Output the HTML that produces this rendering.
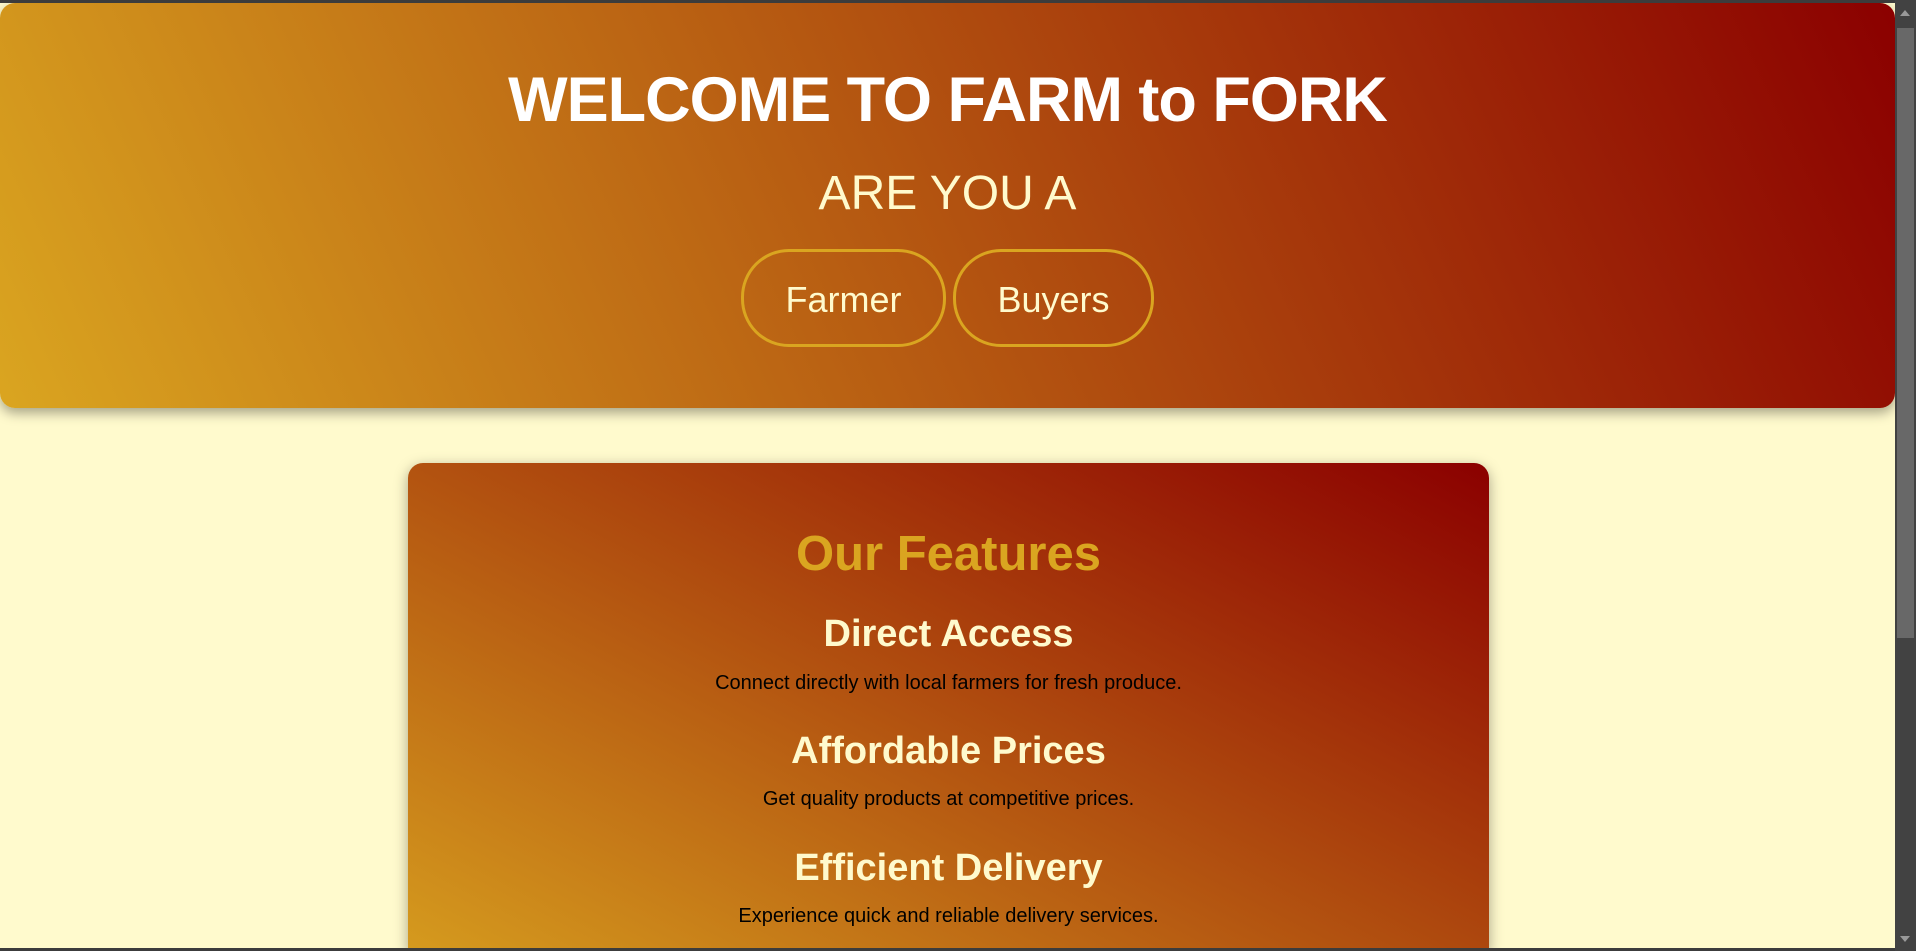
<!DOCTYPE html>
<html><head><style>
html,body{margin:0;padding:0;overflow:hidden;height:951px;}
body{width:1916px;height:951px;overflow:hidden;background:#FFFACD;position:relative;font-family:"Segoe UI","Liberation Sans",sans-serif;}
.topbar{position:absolute;left:0;top:0;width:1916px;height:3px;background:#3c3c3c;z-index:5;}
.botbar{position:absolute;left:0;top:948px;width:1895px;height:3px;background:#3c3c3c;z-index:5;}
.sb{position:absolute;left:1895px;top:0;width:21px;height:951px;background:#424242;z-index:5;}
.thumb{position:absolute;left:2px;top:28px;width:17px;height:610px;background:#686868;}
.up{position:absolute;left:5px;top:10px;width:0;height:0;border-left:5px solid transparent;border-right:5px solid transparent;border-bottom:6px solid #999;}
.down{position:absolute;left:5px;top:936px;width:0;height:0;border-left:5px solid transparent;border-right:5px solid transparent;border-top:6px solid #999;}
.hero{position:absolute;left:0;top:3px;width:1895px;height:405px;border-radius:15px;background:linear-gradient(65deg,#DAA520 0%,#8B0000 100%);box-shadow:0 5px 12px rgba(0,0,0,0.35);}
.h1{position:absolute;left:0;width:1895px;text-align:center;top:61px;font-size:63px;font-weight:bold;color:#fff;letter-spacing:-1px;}
.are{position:absolute;left:0;width:1895px;text-align:center;top:163px;font-size:48px;color:#FFFACD;}
.btn{position:absolute;top:246px;height:92px;border:3px solid #DAA520;border-radius:48px;color:#FFFACD;font-size:36px;text-align:center;line-height:96px;}
.card{position:absolute;left:408px;top:463px;width:1081px;height:488px;border-radius:15px 15px 0 0;background:linear-gradient(to top right,#DAA520 0%,#8B0000 100%) 0 0/1081px 560px no-repeat;box-shadow:0 4px 14px rgba(0,0,0,0.35);overflow:hidden;}
.c{position:absolute;left:0;width:1081px;text-align:center;}
.ft{font-size:49px;font-weight:bold;color:#DAA520;top:63px;}
.h3{font-size:38px;font-weight:bold;color:#FFFACD;}
.p{font-size:20px;color:#000;}
</style></head><body>
<div class="topbar"></div>
<div class="hero">
<div class="h1">WELCOME TO FARM to FORK</div>
<div class="are">ARE YOU A</div>
<div class="btn" style="left:741px;width:199px;">Farmer</div>
<div class="btn" style="left:953px;width:195px;">Buyers</div>
</div>
<div class="card">
<div class="c ft">Our Features</div>
<div class="c h3" style="top:150px">Direct Access</div>
<div class="c p" style="top:209px">Connect directly with local farmers for fresh produce.</div>
<div class="c h3" style="top:267px">Affordable Prices</div>
<div class="c p" style="top:325px">Get quality products at competitive prices.</div>
<div class="c h3" style="top:384px">Efficient Delivery</div>
<div class="c p" style="top:442px">Experience quick and reliable delivery services.</div>
</div>
<div class="botbar"></div>
<div class="sb"><div class="up"></div><div class="thumb"></div><div class="down"></div></div>
</body></html>
